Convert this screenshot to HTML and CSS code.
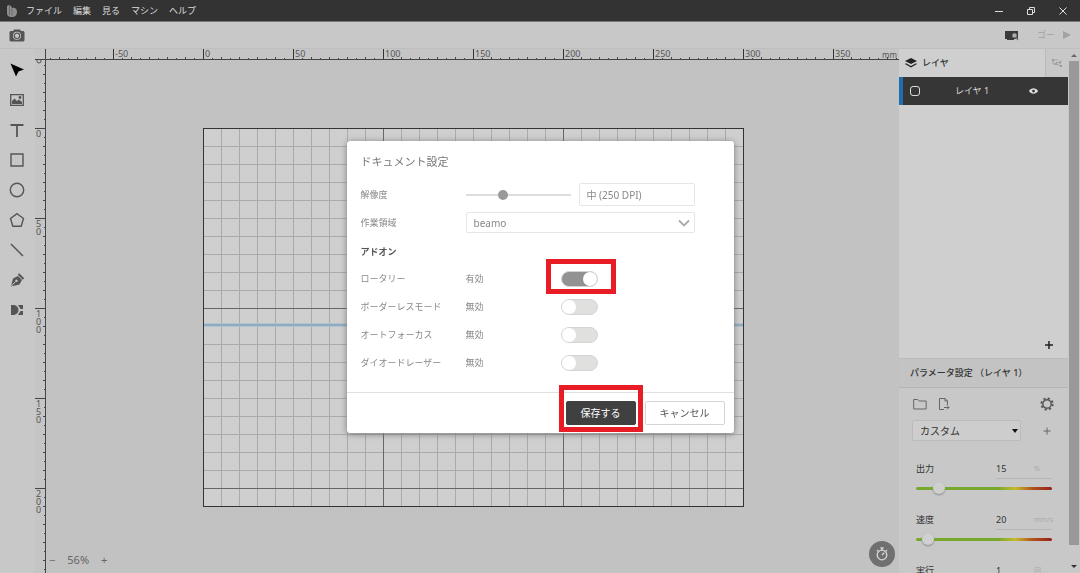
FILE: index.html
```html
<!DOCTYPE html>
<html lang="ja">
<head>
<meta charset="utf-8">
<title>Beam Studio</title>
<link rel="stylesheet" href="styles.css">
</head>
<body>
<header class="titlebar">
  <svg class="logo" viewBox="0 0 12 14" aria-hidden="true"><path d="M1 2l2-1 2 1 1 2c3-1 5 1 5 4s-2 5-5 5-5-1-5-4z" fill="#8d8d8d"/><path d="M3.500 2v9M6 4.500v7" stroke="#6c6c6c" fill="none"/></svg>
  <nav class="menu">
    <a href="#">ファイル</a><a href="#">編集</a><a href="#">見る</a><a href="#">マシン</a><a href="#">ヘルプ</a>
  </nav>
  <div class="window-buttons">
    <button aria-label="最小化"><svg viewBox="0 0 10 10"><path d="M1 5.500h8"/></svg></button>
    <button aria-label="元に戻す"><svg viewBox="0 0 10 10"><path d="M1.500 3.500h5v5h-5zM3.500 3.500v-2h5v5h-2"/></svg></button>
    <button aria-label="閉じる"><svg viewBox="0 0 10 10"><path d="M1.500 1.500l7 7M8.500 1.500l-7 7"/></svg></button>
  </div>
</header>

<div class="toolbar">
  <button class="camera" aria-label="カメラ"><svg viewBox="0 0 16 13"><path fill="#555" fill-rule="evenodd" d="M1.500 2H4l1-1.500h6L12 2h2.500l1 1v8.500l-1 1h-13l-1-1V3zM8 2.800a4 4 0 1 0 0 8 4 4 0 0 0 0-8z"/><circle cx="8" cy="6.800" r="2.700" fill="none" stroke="#555" stroke-width="1.200"/></svg></button>
  <div class="toolbar-right">
    <button aria-label="プレビュー"><svg class="monitor" viewBox="0 0 15 11"><path d="M1 1h13v8H1z" fill="#3a3a3a"/><path d="M3 9.500h7" stroke="#3a3a3a"/><circle cx="10.500" cy="5.500" r="2.200" fill="#b4b4b4" stroke="#777"/><path d="M12 7.500l2 2.500" stroke="#777" stroke-width="1.300"/></svg></button>
    <button class="go">ゴー<svg viewBox="0 0 8 8"><path d="M0 0l8 4-8 4z" fill="#a2a2a2"/></svg></button>
  </div>
</div>

<main class="main">
  <aside class="tools">
    <button aria-label="選択"><svg viewBox="0 0 16 16"><path d="M1.500 1.500L15 7.500 9.500 9.500 7 14.500z" fill="#000"/></svg></button>
    <button aria-label="画像"><svg viewBox="0 0 16 16"><path d="M1.700 2.700h12.600v10.600H1.700z" fill="none" stroke="#555" stroke-width="1.300"/><path d="M3 12V9l2.500-2.500L8 9l2-1.500 3 2.500v2z" fill="#555"/><circle cx="11" cy="5.500" r="1.400" fill="#555"/></svg></button>
    <button aria-label="テキスト"><svg viewBox="0 0 16 16"><path d="M1.500 3h13M8 3v12" fill="none" stroke="#555" stroke-width="1.800"/></svg></button>
    <button aria-label="長方形"><svg viewBox="0 0 16 16"><path d="M2 2h12v12H2z" fill="none" stroke="#555" stroke-width="1.400"/></svg></button>
    <button aria-label="楕円"><svg viewBox="0 0 16 16"><circle cx="8" cy="8" r="6.700" fill="none" stroke="#555" stroke-width="1.400"/></svg></button>
    <button aria-label="多角形"><svg viewBox="0 0 16 16"><path d="M8 1.700l6.500 4.800-2.300 7.700H3.800L1.500 6.500z" fill="none" stroke="#555" stroke-width="1.400"/></svg></button>
    <button aria-label="線"><svg viewBox="0 0 16 16"><path d="M2 2l12 12" stroke="#555" stroke-width="1.500"/></svg></button>
    <button aria-label="ペン"><svg viewBox="0 0 16 16"><path d="M2 14.500L4 6.500 9 4l4 4-2.500 4.500z" fill="#555"/><path d="M9.500 2l5 5" stroke="#555" stroke-width="2"/><path d="M2.500 14l4-4.500" stroke="#c8c8c8"/><circle cx="7.500" cy="8.800" r="1.200" fill="#c8c8c8"/></svg></button>
    <button aria-label="ミラー"><svg viewBox="0 0 16 16"><path d="M2 3h2.500a5 5 0 0 1 0 10H2zM14 3v4h-2.500L9 3zM14 13V9h-2.500L9 13z" fill="#555"/></svg></button>
  </aside>

  <section class="workspace" aria-label="作業領域">
    <svg class="drawing" aria-hidden="true">
      <defs>
        <pattern id="hticks" x="168" y="0" width="18" height="11" patternUnits="userSpaceOnUse"><path d="M.5 8v3M9.500 9v2" stroke="#444"/></pattern>
        <pattern id="vticks" x="0" y="79" width="11" height="18" patternUnits="userSpaceOnUse"><path d="M8 .5h3M9 9.500h2" stroke="#444"/></pattern>
        <pattern id="hmajor" x="78" y="0" width="90" height="11" patternUnits="userSpaceOnUse"><path d="M.5 0v11" stroke="#333"/></pattern>
        <pattern id="vmajor" x="0" y="79" width="11" height="90" patternUnits="userSpaceOnUse"><path d="M0 .5h11" stroke="#444"/></pattern>
        <pattern id="grid" x="168" y="79" width="18" height="18" patternUnits="userSpaceOnUse"><path d="M.5 0v18M0 .5h18" stroke="#aaa"/></pattern>
      </defs>
      <rect class="ruler-bg" width="11" height="100%"/>
      <rect class="ruler-bg" width="100%" height="11"/>
      <rect x="11" width="100%" height="11" fill="url(#hticks)"/>
      <rect x="11" width="100%" height="11" fill="url(#hmajor)"/>
      <rect y="11" width="11" height="100%" fill="url(#vticks)"/>
      <rect y="11" width="11" height="100%" fill="url(#vmajor)"/>
      <path d="M10.500 0v2000M0 10.500h4000" stroke="#444"/>
      <g class="ruler-text">
        <text x="80" y="8">-50</text><text x="170" y="8">0</text><text x="260" y="8">50</text><text x="350" y="8">100</text><text x="440" y="8">150</text><text x="530" y="8">200</text><text x="620" y="8">250</text><text x="710" y="8">300</text><text x="800" y="8">350</text><text class="unit" x="847" y="9">mm</text>
        <text x="1" y="88">0</text>
        <text><tspan x="1" y="178">5</tspan><tspan x="1" y="186">0</tspan></text>
        <text><tspan x="1" y="268">1</tspan><tspan x="1" y="276">0</tspan><tspan x="1" y="284">0</tspan></text>
        <text><tspan x="1" y="358">1</tspan><tspan x="1" y="366">5</tspan><tspan x="1" y="374">0</tspan></text>
        <text><tspan x="1" y="448">2</tspan><tspan x="1" y="456">0</tspan><tspan x="1" y="464">0</tspan></text>
      </g>
      <path d="M2 11v1a2 2 0 0 0 4 0v-1" fill="none" stroke="#555"/>
      <rect x="168" y="79" width="541" height="379" fill="#cfcfcf"/>
      <rect x="168" y="79" width="541" height="379" fill="url(#grid)"/>
      <path d="M348.500 79v379M528.500 79v379M168 259.500h541M168 439.500h541" stroke="#666"/>
      <path d="M168 276h541" stroke="#b4c3cd" stroke-width="4"/><path d="M168 276h541" stroke="#8eacc0" stroke-width="2"/>
      <rect x="168.500" y="79.500" width="540" height="378" fill="none" stroke="#333"/>
    </svg>
    <div class="zoom"><button aria-label="縮小">−</button><span>56%</span><button aria-label="拡大">+</button></div>
    <button class="timer" aria-label="所要時間"><svg viewBox="0 0 16 16"><circle cx="8" cy="9" r="4.800" fill="none" stroke="#d8d8d8" stroke-width="1.300"/><path d="M8 9l2.200-2.200M6.500 2h3M8 2v2M3 4l1.200 1.200M11.800 5.200L13 4" stroke="#d8d8d8" stroke-width="1.300" fill="none"/></svg></button>
  </section>

  <aside class="panel">
    <div class="tabs">
      <button class="tab"><svg viewBox="0 0 12 10"><path d="M6 0l6 3-6 3-6-3z" fill="#222"/><path d="M1 5.300L6 8l5-2.700 1 .7-6 3.500L0 6z" fill="#222"/></svg>レイヤ</button>
      <button class="tab-objects" aria-label="オブジェクト"><svg viewBox="0 0 12 10"><path d="M3 2h4M2 3v3h3M5 4.500h4M9.500 2.500v2M6 7h3" fill="none" stroke="#a5a5a5"/><path d="M1 1h2v2H1zM4 5h2v2H4zM9 7h2v2H9zM8 3.500h2v2H8z" fill="#999"/></svg></button>
    </div>
    <div class="layers">
      <div class="layer">
        <span class="swatch"></span><span class="layer-name">レイヤ 1</span>
        <svg viewBox="0 0 12 8"><path d="M1 4c2.500-4 7.500-4 10 0-2.500 4-7.500 4-10 0z" fill="#ddd"/><circle cx="6" cy="4" r="1.500" fill="#333"/></svg>
      </div>
      <button class="add-layer" aria-label="レイヤを追加"><svg viewBox="0 0 10 10"><path d="M5 1v8M1 5h8" stroke="#222" stroke-width="1.500"/></svg></button>
    </div>
    <h2 class="params-title">パラメータ設定 （レイヤ 1）</h2>
    <div class="params">
      <div class="params-icons">
        <button aria-label="開く"><svg viewBox="0 0 14 14"><path d="M.7 2.500h4l1.500 1.500h7v8H.7z" fill="none" stroke="#666"/></svg></button>
        <button aria-label="書き出し"><svg viewBox="0 0 14 14"><path d="M10.500 8V4L8 1.500H2.500v11H7M8 1.500V4h2.500M7 10.500h5M10 8.500l2 2-2 2" fill="none" stroke="#666"/></svg></button>
        <button class="gear" aria-label="設定"><svg viewBox="0 0 14 14"><circle cx="7" cy="7" r="5.700" fill="none" stroke="#555" stroke-width="1.800" stroke-dasharray="2.240 2.237"/><circle cx="7" cy="7" r="4.200" fill="none" stroke="#555" stroke-width="1.400"/></svg></button>
      </div>
      <div class="preset">
        <div class="select-wrap"><select aria-label="プリセット"><option>カスタム</option></select><svg class="caret" viewBox="0 0 6 4"><path d="M0 0h6L3 4z" fill="#111"/></svg></div>
        <button aria-label="プリセットを追加"><svg class="plus" viewBox="0 0 10 10"><path d="M5 1.500v7M1.500 5h7" stroke="#666"/></svg></button>
      </div>
      <div class="param">
        <label for="power">出力</label><span class="value"><input id="power" value="15"><span>%</span></span>
        <input type="range" aria-label="出力スライダー" min="0" max="100" value="14">
      </div>
      <div class="param">
        <label for="speed">速度</label><span class="value"><input id="speed" value="20"><span>mm/s</span></span>
        <input type="range" aria-label="速度スライダー" min="0" max="100" value="5">
      </div>
      <div class="param">
        <label for="repeat">実行</label><span class="value"><input id="repeat" value="1"><span>回</span></span>
      </div>
    </div>
  </aside>
  <div class="scrollbar" aria-hidden="true"><i class="up"></i><div class="thumb"></div><i class="down"></i></div>
</main>

<div class="overlay">
  <form class="dialog" role="dialog" aria-labelledby="dialog-title">
    <div class="dialog-body">
      <h1 id="dialog-title">ドキュメント設定</h1>
      <div class="row">
        <label for="dpi">解像度</label>
        <div class="controls"><input id="dpi" class="dpi-range" type="range" min="0" max="100" value="34"><input class="dpi-text" aria-label="解像度の値" value="中 (250 DPI)"></div>
      </div>
      <div class="row">
        <label for="area">作業領域</label>
        <div class="controls select-wrap"><select id="area"><option>beamo</option></select><svg class="chevron" viewBox="0 0 12 8"><path d="M1 1.500l5 5 5-5" fill="none" stroke="#aaa" stroke-width="1.800"/></svg></div>
      </div>
      <h2>アドオン</h2>
      <div class="row"><label for="rotary">ロータリー</label><div class="controls"><span class="state">有効</span><span class="marked"><input id="rotary" class="switch" type="checkbox" checked></span></div></div>
      <div class="row"><label for="borderless">ボーダーレスモード</label><div class="controls"><span class="state">無効</span><input id="borderless" class="switch" type="checkbox"></div></div>
      <div class="row"><label for="autofocus">オートフォーカス</label><div class="controls"><span class="state">無効</span><input id="autofocus" class="switch" type="checkbox"></div></div>
      <div class="row"><label for="diode">ダイオードレーザー</label><div class="controls"><span class="state">無効</span><input id="diode" class="switch" type="checkbox"></div></div>
    </div>
    <footer class="dialog-footer">
      <span class="marked"><button type="button" class="btn primary">保存する</button></span>
      <button type="button" class="btn">キャンセル</button>
    </footer>
  </form>
</div>
</body>
</html>
```

FILE: styles.css
```css
* { box-sizing: border-box; }
body { margin: 0; height: 100vh; overflow: hidden; display: flex; flex-direction: column; background: #c8c8c8; color: #333; font: 9px/14px "Noto Sans", "Noto Sans CJK JP", sans-serif; }
button, input, select { font: inherit; color: inherit; border: 0; margin: 0; padding: 0; background: none; border-radius: 0; }
button { display: flex; align-items: center; justify-content: center; }
h1, h2 { margin: 0; font-weight: 400; }
svg { display: block; flex: none; }

.titlebar { height: 22px; flex: none; display: flex; align-items: center; padding: 0 12px 0 6px; background: #333; border-bottom: 1px solid #777; color: #ddd; }
.logo { width: 12px; height: 14px; }
.menu { display: flex; gap: 11px; margin-left: 8px; }
.menu a { color: inherit; text-decoration: none; }
.window-buttons { margin-left: auto; display: flex; gap: 22px; }
.window-buttons svg { width: 10px; height: 10px; fill: none; stroke: #ddd; }

.toolbar { height: 27px; flex: none; display: flex; align-items: center; justify-content: space-between; padding: 0 9px; border-bottom: 1px solid #bfbfbf; }
.camera svg { width: 16px; height: 13px; }
.toolbar-right { display: flex; gap: 18px; }
.monitor { width: 15px; height: 11px; }
.go { gap: 8px; color: #a2a2a2; }
.go svg { width: 8px; height: 8px; }

.main { flex: 1; min-height: 0; display: flex; }
.tools { width: 35px; flex: none; display: flex; flex-direction: column; gap: 14px; padding: 13px 1px 0 0; align-items: center; }
.tools svg { width: 16px; height: 16px; }
.workspace { flex: 1; min-width: 0; position: relative; background: #c2c2c2; }
.drawing { width: 100%; height: 100%; }
.ruler-bg { fill: #c5c5c5; }
.ruler-text { font-size: 9px; fill: #555; }
.unit { font-size: 8px; }
.zoom { position: absolute; left: 14px; bottom: 5px; display: flex; gap: 12px; font-size: 11px; line-height: 16px; color: #666; }
.timer { position: absolute; right: 4px; bottom: 6px; width: 26px; height: 26px; border-radius: 50%; background: #707070; }
.timer svg { width: 16px; height: 16px; }

.panel { width: 169px; flex: none; display: flex; flex-direction: column; overflow: hidden; }
.tabs { height: 28px; flex: none; display: flex; }
.tab { flex: 1; justify-content: flex-start; gap: 5px; padding-left: 6px; background: #cfcfcf; font-weight: 500; }
.tabs svg { width: 12px; height: 10px; }
.tab-objects { width: 23px; border-left: 1px solid #bbb; }
.layers { height: 281px; flex: none; display: flex; flex-direction: column; justify-content: space-between; background: #cfcfcf; }
.layer { height: 28px; display: flex; align-items: center; padding: 0 29px 0 7px; border-left: 4px solid #1f6fae; background: #363636; color: #ddd; }
.layer svg { width: 11px; height: 8px; }
.layer-name { flex: 1; padding-right: 4px; text-align: center; }
.swatch { width: 10px; height: 10px; border: 1px solid #ddd; border-radius: 3px; }
.add-layer { align-self: flex-end; margin: 0 14px 8px 0; }
.add-layer svg { width: 10px; height: 10px; }
.params-title { height: 30px; flex: none; padding-left: 11px; background: #c3c3c3; border-top: 1px solid #bbb; border-bottom: 1px solid #b5b5b5; font-size: 9px; line-height: 28px; font-weight: 500; }
.params { padding: 9px 14px 0 13px; }
.params-icons { display: flex; gap: 10px; padding-left: 1px; }
.params-icons svg { width: 14px; height: 14px; }
.gear { margin-left: auto; }
.preset { display: flex; justify-content: space-between; margin-top: 9px; padding-right: 2px; }
.preset select { appearance: none; width: 109px; height: 21px; padding: 0 7px; border: 1px solid #bbb; border-radius: 2px; background: #cdcdcd; font-size: 10px; }
.plus { width: 10px; height: 10px; }
.param { display: grid; grid-template-columns: 80px minmax(0, 1fr); margin: 18px 2px 0 4px; row-gap: 2px; height: 33px; align-content: start; }
.param label { line-height: 19px; }
.value { display: flex; border-bottom: 1px solid #b5b5b5; line-height: 19px; }
.value input { width: 38px; flex: none; }
.value span { color: #aaa; font-size: 7px; }
.param input[type=range] { grid-column: 1 / -1; appearance: none; width: 100%; height: 14px; }
.param input::-webkit-slider-runnable-track { height: 3px; border-radius: 2px; background: linear-gradient(90deg, #76a82c 60%, #c4bb2b 73%, #b1501f 86%, #98211b); }
.param input::-webkit-slider-thumb { appearance: none; width: 12px; height: 12px; margin-top: -5px; border-radius: 50%; background: #cfcfcf; box-shadow: 0 1px 2px #888; }
.scrollbar { width: 12px; flex: none; display: flex; flex-direction: column; align-items: center; background: #c8c8c8; }
.thumb { flex: 1; width: 10px; background: #999; }
.up, .down { border: 3px solid transparent; }
.up { margin: 2px 0 4px; border-bottom-color: #666; }
.down { margin: 20px 0 2px; border-top-color: #333; }

.select-wrap { position: relative; display: flex; align-items: center; }
.select-wrap svg { position: absolute; pointer-events: none; }
.caret { right: 3px; width: 6px; height: 4px; }
.chevron { right: 5px; width: 12px; height: 8px; }

.overlay { position: fixed; inset: 0; display: flex; align-items: center; justify-content: center; }
.dialog { width: 387px; background: #fff; border-radius: 3px; color: #888; box-shadow: 0 1px 6px #777; }
.dialog-body { padding: 0 14px 15px; }
.dialog h1 { padding-top: 2px; font-size: 11px; line-height: 38px; color: #777; }
.dialog h2 { padding-top: 2px; font-size: 9px; line-height: 26px; font-weight: 700; color: #555; }
.row { height: 28px; display: grid; grid-template-columns: 105px 229px; align-items: center; }
.row label, .state { padding-top: 1px; }
.controls { display: flex; align-items: center; gap: 8px; }
.state { width: 87px; }
.dpi-range { appearance: none; width: 105px; height: 12px; }
.dpi-range::-webkit-slider-runnable-track { height: 2px; background: #ddd; }
.dpi-range::-webkit-slider-thumb { appearance: none; width: 10px; height: 10px; margin-top: -4px; border-radius: 50%; background: #999; }
.dpi-text { flex: 1; min-width: 0; height: 23px; padding: 0 7px; border: 1px solid #e6e6e6; border-radius: 2px; font-size: 10px; }
.controls select { appearance: none; width: 100%; height: 21px; padding: 0 7px; border: 1px solid #e6e6e6; border-radius: 2px; font-size: 10px; }
.switch { appearance: none; display: block; width: 37px; height: 16px; border: 1px solid #d5d5d5; border-radius: 8px; background: #e0e0df; }
.switch::before { content: ""; display: block; width: 14px; height: 14px; border-radius: 50%; background: #fff; }
.switch:checked { background: #929292; }
.switch:checked::before { margin-left: auto; }
.marked { position: relative; display: block; }
.marked::after { content: ""; position: absolute; inset: -12px -18px -7px -15px; border: 5px solid #e81c24; pointer-events: none; }
.dialog-footer { display: flex; justify-content: flex-end; gap: 9px; padding: 8px 9px 8px 8px; border-top: 1px solid #e0e0e0; }
.dialog-footer .marked::after { inset: -16px -7px -7px -7px; }
.btn { height: 24px; min-width: 80px; border: 1px solid #d5d5d5; border-radius: 2px; font-size: 10px; color: #555; }
.primary { min-width: 70px; background: #404040; border-color: #404040; color: #fff; }
```
